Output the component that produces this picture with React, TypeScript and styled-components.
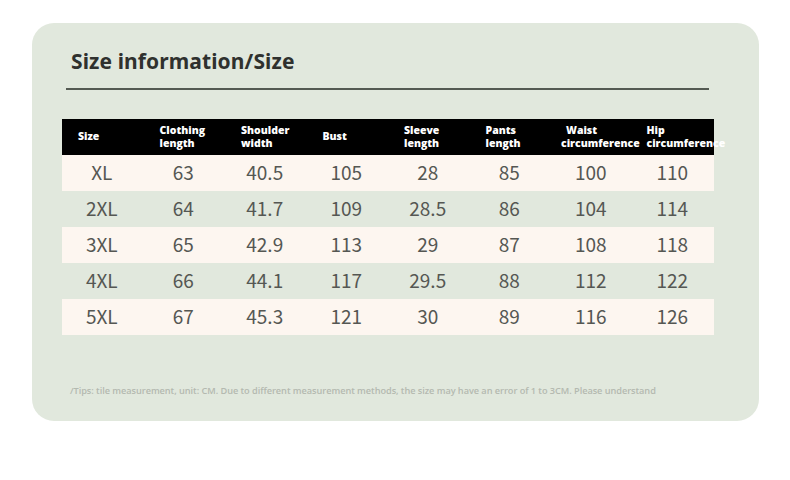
import styled, { createGlobalStyle } from 'styled-components';

const GlobalStyle = createGlobalStyle`
  html, body {
    margin: 0;
    padding: 0;
    background: #ffffff;
    font-family: 'Noto Sans CJK SC', 'Noto Sans', sans-serif;
  }
`;

const headers = [
  ['Size'],
  ['Clothing', 'length'],
  ['Shoulder', 'width'],
  ['Bust'],
  ['Sleeve', 'length'],
  ['Pants', 'length'],
  ['Waist', 'circumference'],
  ['Hip', 'circumference'],
];

const rows = [
  ['XL', '63', '40.5', '105', '28', '85', '100', '110'],
  ['2XL', '64', '41.7', '109', '28.5', '86', '104', '114'],
  ['3XL', '65', '42.9', '113', '29', '87', '108', '118'],
  ['4XL', '66', '44.1', '117', '29.5', '88', '112', '122'],
  ['5XL', '67', '45.3', '121', '30', '89', '116', '126'],
];

export default function App() {
  return (
    <Page>
      <GlobalStyle />
      <Card>
        <Title>Size information/Size</Title>
        <Rule />
        <Table>
          <HeadRow>
            {headers.map((h, i) => (
              <HeadCell key={i}>
                {h.map((line) => (
                  <span key={line}>{line}</span>
                ))}
              </HeadCell>
            ))}
          </HeadRow>
          {rows.map((r, i) => (
            <Row key={r[0]} $shaded={i % 2 === 0}>
              {r.map((v, j) => (
                <Cell key={j}>{v}</Cell>
              ))}
            </Row>
          ))}
        </Table>
        <Tips>
          /Tips: tile measurement, unit: CM. Due to different measurement methods, the size may have an
          error of 1 to 3CM. Please understand
        </Tips>
      </Card>
    </Page>
  );
}

const Page = styled.div`
  width: 790px;
  height: 480px;
  padding: 23px 0 0 32px;
  box-sizing: border-box;
  overflow: hidden;
`;

const Card = styled.div`
  width: 727px;
  height: 398px;
  box-sizing: border-box;
  background: #e1e8dd;
  border-radius: 22px;
  padding: 23px 0 0 30px;
  display: flex;
  flex-direction: column;
`;

const Title = styled.h1`
  margin: 0 0 0 9px;
  font-family: 'Noto Sans', sans-serif;
  font-size: 21px;
  line-height: 30px;
  font-weight: 700;
  color: #2f312e;
  letter-spacing: 0.1px;
`;

const Rule = styled.div`
  margin: 12px 0 0 4px;
  width: 643px;
  height: 2px;
  background: #545a52;
`;

const Table = styled.div`
  margin-top: 29px;
  width: 652px;
  display: flex;
  flex-direction: column;
`;

const HeadRow = styled.div`
  display: grid;
  grid-template-columns: repeat(8, 81.5px);
  height: 36px;
  background: #000000;
`;

const HeadCell = styled.div`
  display: flex;
  flex-direction: column;
  justify-content: center;
  padding-left: 16px;
  font-family: 'Open Sans', sans-serif;
  font-size: 10.5px;
  line-height: 13.5px;
  font-weight: 800;
  color: #ffffff;
  white-space: nowrap;
  &:nth-child(7) {
    padding-left: 10px;
  }
  &:nth-child(8) {
    padding-left: 14px;
  }
  &:nth-child(7) span:first-child {
    padding-left: 5px;
  }
`;

const Row = styled.div<{ $shaded: boolean }>`
  display: grid;
  grid-template-columns: repeat(8, 81.5px);
  height: 36px;
  background: ${(p) => (p.$shaded ? '#fdf6f0' : 'transparent')};
`;

const Cell = styled.div`
  display: flex;
  align-items: center;
  justify-content: center;
  font-size: 19px;
  line-height: 34px;
  padding-bottom: 2px;
  color: #555753;
  padding-right: 2px;
`;

const Tips = styled.p`
  margin: 49px 0 0 8px;
  font-family: 'Open Sans', sans-serif;
  font-size: 9.2px;
  font-weight: 600;
  color: #b4b9b0;
  white-space: nowrap;
  letter-spacing: -0.05px;
`;
